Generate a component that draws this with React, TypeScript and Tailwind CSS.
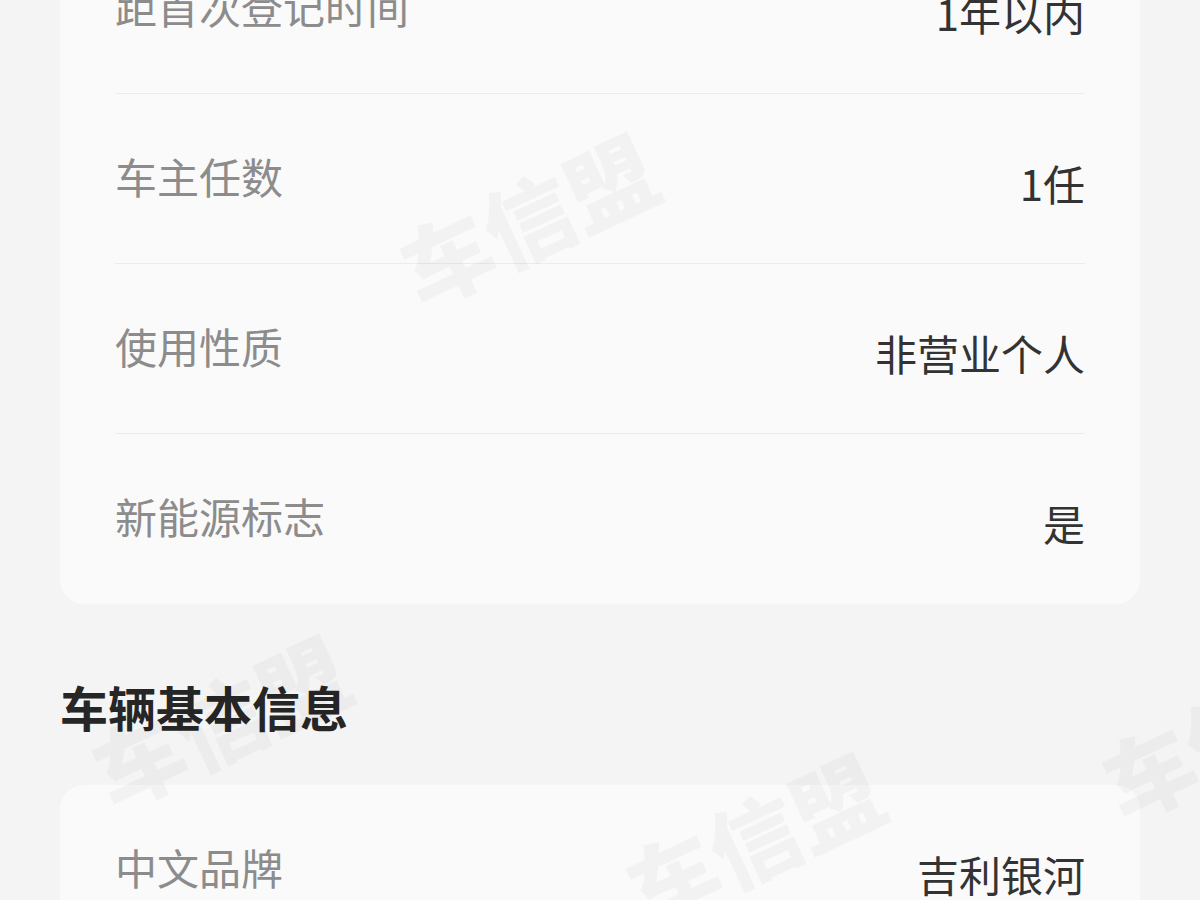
const FONT = "font-['Noto_Sans_CJK_SC','Noto_Sans',sans-serif]";

const TOP_ROWS = [
  { label: "距首次登记时间", value: "1年以内" },
  { label: "车主任数", value: "1任" },
  { label: "使用性质", value: "非营业个人" },
  { label: "新能源标志", value: "是" },
];

const BASIC_ROWS = [
  { label: "中文品牌", value: "吉利银河" },
  { label: "车辆型号", value: "—" },
];

// faint rotated "车信盟" marks laid over the page
const MARKS = [
  { left: "left-[392px]", top: "top-[172px]" },
  { left: "left-[84px]", top: "top-[674px]" },
  { left: "left-[618px]", top: "top-[792px]" },
  { left: "left-[1094px]", top: "top-[686px]" },
];

function InfoRow({ label, value, last }: { label: string; value: string; last?: boolean }) {
  return (
    <div
      className={`flex h-[170px] items-center justify-between ${last ? "" : "border-b border-[#ececec]"}`}
    >
      <span className="pb-[6px] text-[42px] leading-none text-[#8c8c8c]">{label}</span>
      <span className="pt-[8px] text-[42px] leading-none text-[#333333]">{value}</span>
    </div>
  );
}

export default function App() {
  return (
    <div className={`relative h-[900px] w-[1200px] overflow-hidden bg-[#f4f4f4] ${FONT}`}>
      <div className="px-[60px]">
        <div className="-mt-[76px] rounded-[24px] bg-[#fafafa] px-[55px]">
          {TOP_ROWS.map((row, i) => (
            <InfoRow key={row.label} {...row} last={i === TOP_ROWS.length - 1} />
          ))}
        </div>

        <h2 className="mt-[66px] mb-[43px] text-[48px] font-bold leading-[72px] text-[#262626]">
          车辆基本信息
        </h2>

        <div className="rounded-[24px] bg-[#fafafa] px-[55px]">
          {BASIC_ROWS.map((row, i) => (
            <InfoRow key={row.label} {...row} last={i === BASIC_ROWS.length - 1} />
          ))}
        </div>
      </div>

      {MARKS.map((m, i) => (
        <div
          key={i}
          className={`pointer-events-none absolute ${m.left} ${m.top} -rotate-[25deg] select-none whitespace-nowrap text-[90px] font-black leading-none text-black/[0.03]`}
        >
          车信盟
        </div>
      ))}
    </div>
  );
}
